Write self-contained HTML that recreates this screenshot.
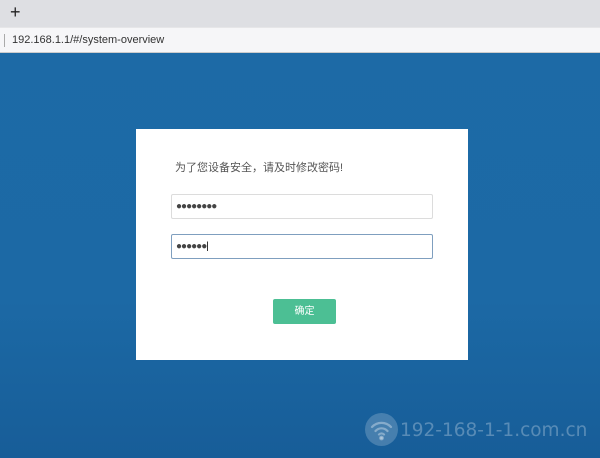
<!DOCTYPE html>
<html><head><meta charset="utf-8"><style>
*{margin:0;padding:0;box-sizing:border-box}
body{width:600px;height:458px;overflow:hidden;background:linear-gradient(#1d6aa6 0,#1c69a5 300px,#175d98 458px);font-family:"Liberation Sans","Noto Sans CJK SC",sans-serif;position:relative}
.tab{position:absolute;left:0;top:0;width:600px;height:27px;background:#dedfe3}
.plus{position:absolute;left:10px;top:2px;font-size:18px;color:#222}
.addr{position:absolute;left:0;top:27px;width:600px;height:26px;background:#f6f6f8;border-top:1px solid #e6e6e8;border-bottom:1px solid #ccc}
.addr span{position:absolute;left:12px;top:6px;font-size:11px;color:#333}
.addr i{position:absolute;left:4px;top:6px;width:1px;height:13px;background:#aaa}
.card{position:absolute;left:136px;top:129px;width:332px;height:231px;background:#fff}
.title{position:absolute;left:39px;top:30px;font-size:11px;color:#555}
.in{position:absolute;left:35px;width:262px;height:25px;border:1px solid #dcdcdc;border-radius:2px;font-size:10px;color:#444;padding:6px 0 0 4px;letter-spacing:-1px}
.in2{border-color:#7f9fbf}
.btn{position:absolute;left:137px;top:170px;width:63px;height:25px;background:#4cbf94;border-radius:2px;color:#fff;font-size:10px;text-align:center;line-height:25px}
.wm{position:absolute;left:365px;top:413px;width:33px;height:33px;border-radius:50%;background:rgba(255,255,255,.2)}
.wmt{position:absolute;left:400px;top:420px;font-family:"DejaVu Sans",sans-serif;font-size:18.5px;color:rgba(255,255,255,.28)}
</style></head><body>
<div class="tab"><div class="plus">+</div></div>
<div class="addr"><i></i><span>192.168.1.1/#/system-overview</span></div>
<div class="card">
<div class="title">为了您设备安全，请及时修改密码!</div>
<div class="in" style="top:65px">●●●●●●●●</div>
<div class="in in2" style="top:105px">●●●●●●<span style="color:#000;letter-spacing:0">|</span></div>
<div class="btn">确定</div>
</div>
<div class="wm"><svg width="33" height="33" viewBox="0 0 33 33" fill="none" stroke="rgba(255,255,255,.35)" stroke-width="2.2" stroke-linecap="round"><path d="M7 14a13 13 0 0 1 19 0"/><path d="M10.5 18a8 8 0 0 1 12 0"/><path d="M14 21.5a3.5 3.5 0 0 1 5 0"/><circle cx="16.5" cy="25" r="1.3" fill="rgba(255,255,255,.35)"/></svg></div>
<div class="wmt">192-168-1-1.com.cn</div>
</body></html>
